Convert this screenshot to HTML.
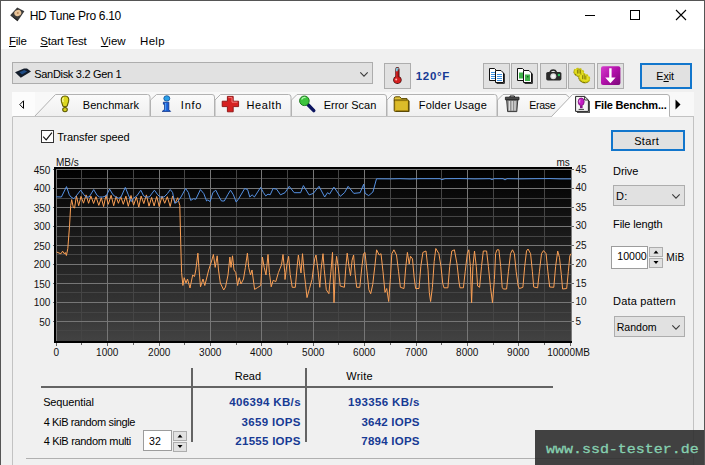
<!DOCTYPE html>
<html>
<head>
<meta charset="utf-8">
<title>HD Tune Pro 6.10</title>
<style>
*{margin:0;padding:0;box-sizing:border-box;}
html,body{width:705px;height:465px;overflow:hidden;background:#f0f0f0;}
body{font-family:"Liberation Sans",sans-serif;font-size:12px;color:#000;position:relative;}
.abs{position:absolute;}
.t{position:absolute;white-space:nowrap;line-height:14px;height:14px;transform-origin:0 50%;}
.ax{position:absolute;white-space:nowrap;font-size:10px;line-height:10px;height:10px;color:#111;}
.axl{text-align:right;width:30px;}
.btn{position:absolute;background:#e1e1e1;border:1px solid #adadad;}
.val{font-weight:bold;color:#173a94;text-align:right;}
u{text-decoration:underline;text-underline-offset:1px;}
#title{letter-spacing:-0.30px;margin-left:-0.30px;}
#m1{letter-spacing:-0.25px;margin-left:1.00px;}
#m2{letter-spacing:-0.22px;margin-left:0.35px;}
#m3{letter-spacing:-0.00px;margin-left:-0.15px;}
#m4{letter-spacing:0.30px;margin-left:0.05px;}
#drivetxt{letter-spacing:-0.30px;margin-left:-0.80px;}
#temp{letter-spacing:0.70px;margin-left:-0.25px;}
#exittxt{letter-spacing:-0.10px;margin-left:0.35px;}
#tb1{letter-spacing:0.08px;margin-left:-0.25px;}
#tb2{letter-spacing:0.73px;margin-left:-0.15px;}
#tb3{letter-spacing:0.57px;margin-left:-0.40px;}
#tb4{letter-spacing:0.00px;margin-left:-0.30px;}
#tb5{letter-spacing:0.18px;margin-left:-0.25px;}
#tb6{letter-spacing:-0.36px;margin-left:-0.70px;}
#tb7{letter-spacing:-0.18px;margin-left:-0.50px;}
#tspeed{letter-spacing:-0.08px;margin-left:0.15px;}
#rd{letter-spacing:0.03px;margin-left:-0.25px;}
#wr{letter-spacing:0.22px;margin-left:0.25px;}
#r1{letter-spacing:-0.12px;margin-left:-0.85px;}
#r2{letter-spacing:-0.37px;margin-left:-0.35px;}
#r3{letter-spacing:-0.31px;margin-left:-0.35px;}
#v1{letter-spacing:0.35px;margin-left:0.90px;}
#v2{letter-spacing:0.32px;margin-left:0.75px;}
#v3{letter-spacing:0.28px;margin-left:0.75px;}
#v4{letter-spacing:0.37px;margin-left:0.75px;}
#v5{letter-spacing:0.23px;margin-left:0.75px;}
#v6{letter-spacing:0.25px;margin-left:0.75px;}
#n32{letter-spacing:0.28px;margin-left:-0.05px;}
#start{letter-spacing:0.38px;margin-left:-0.85px;}
#ldrive{letter-spacing:-0.09px;margin-left:-0.95px;}
#dd{letter-spacing:0.21px;margin-left:-0.90px;}
#lfl{letter-spacing:-0.13px;margin-left:-0.95px;}
#n10000{letter-spacing:-0.01px;margin-left:-0.75px;}
#mib{letter-spacing:0.21px;margin-left:-0.75px;}
#ldp{letter-spacing:0.19px;margin-left:-0.95px;}
#rnd{letter-spacing:-0.03px;margin-left:-0.25px;}
#wm{letter-spacing:-0.01px;margin-left:0.60px;}
</style>
</head>
<body>
<!--TITLE-->
<div class="abs" style="left:0;top:0;width:705px;height:49px;background:#fff;"></div>
<svg class="abs" style="left:9px;top:6px;width:17px;height:17px;" viewBox="0 0 17 17">
  <path d="M1.2 9.2 L8.2 1.6 L15.4 5.2 L8.6 15.2 Z" fill="#3a3a3a"/>
  <path d="M1.2 9.2 L8.6 13.4 L8.6 15.2 Z" fill="#222"/>
  <ellipse cx="8.8" cy="7.0" rx="3.6" ry="3.0" fill="#e9c59a" transform="rotate(-25 8.8 7)"/>
  <circle cx="8.8" cy="7.0" r="1" fill="#b9895a"/>
</svg>
<div class="t" id="title" style="left:30px;top:9px;">HD Tune Pro 6.10</div>
<div class="t" id="m1" style="font-size:11.5px;left:8px;top:34px;"><u>F</u>ile</div>
<div class="t" id="m2" style="font-size:11.5px;left:40px;top:34px;"><u>S</u>tart Test</div>
<div class="t" id="m3" style="font-size:11.5px;left:101px;top:34px;"><u>V</u>iew</div>
<div class="t" id="m4" style="font-size:11.5px;left:140px;top:34px;">Help</div>
<svg class="abs" style="left:560px;top:0;width:145px;height:32px;" viewBox="0 0 145 32">
  <path d="M25 15.5h10" stroke="#000" stroke-width="1" fill="none"/>
  <rect x="70.5" y="10.5" width="9" height="9" stroke="#000" stroke-width="1" fill="none"/>
  <path d="M116 10l10 10M126 10l-10 10" stroke="#000" stroke-width="1.1" fill="none"/>
</svg>
<div class="btn" style="left:12px;top:62px;width:361px;height:22px;"></div>
<svg class="abs" style="left:14px;top:67px;width:18px;height:12px;" viewBox="0 0 18 12">
  <path d="M1 5.2 L10 1.4 L13 1.4 L17 4.4 L6.8 10.8 Z" fill="#131c2a"/>
  <path d="M5.4 5.2 L10.2 3 L13.2 4.4 L8 7.4 Z" fill="#1f4c86"/>
</svg>
<div class="t" id="drivetxt" style="left:35px;top:67px;font-size:11px;">SanDisk 3.2 Gen 1</div>
<svg class="abs" style="left:359px;top:71px;width:10px;height:7px;" viewBox="0 0 10 7"><path d="M1.3 1.4 L5 5.1 L8.7 1.4" stroke="#3a3a3a" stroke-width="1.1" fill="none"/></svg>

<div class="btn" style="left:384px;top:63px;width:27px;height:26px;"></div>
<svg class="abs" style="left:390px;top:65px;width:16px;height:22px;" viewBox="0 0 16 22">
  <path d="M5.3 4.2 a2.1 2.1 0 0 1 4.2 0 V11.6 a4.3 3.9 0 1 1 -4.2 0 Z" fill="#4a0c0c"/>
  <path d="M5.9 4.2 a1.5 1.5 0 0 1 3 0 V12 a3.6 3.2 0 1 1 -3 0 Z" fill="#d42020"/>
  <path d="M5.9 4.2 a1.5 1.5 0 0 1 3 0 V6.2 H5.9 Z" fill="#7fd0e6"/>
  <path d="M8.9 4.2 V12 a3.6 3.2 0 0 1 -1.4 5.9 a3.4 3 0 0 0 0.2 -5.9 V4.2 Z" fill="#7a1212"/>
  <circle cx="6.2" cy="14.6" r="1" fill="#ffb4b4"/>
</svg>
<div class="t val" id="temp" style="left:416px;top:69px;font-size:11.5px;text-align:left;">120°F</div>

<div class="btn" style="left:483px;top:63px;width:27px;height:26px;"></div>
<div class="btn" style="left:511px;top:63px;width:27px;height:26px;"></div>
<div class="btn" style="left:540px;top:63px;width:27px;height:26px;"></div>
<div class="btn" style="left:568px;top:63px;width:27px;height:26px;"></div>
<div class="btn" style="left:597px;top:63px;width:27px;height:26px;"></div>
<!-- copy text icon -->
<svg class="abs" style="left:487px;top:66px;width:20px;height:20px;" viewBox="0 0 20 20">
  <path d="M2.5 2.5 H7.5 L9.5 4.5 V14.5 H2.5 Z" fill="#fff" stroke="#111" stroke-width="1"/>
  <path d="M4 6.5h4M4 8.5h4M4 10.5h4M4 12.5h4" stroke="#3a8fe0" stroke-width="1"/>
  <path d="M9.6 17.4 H17.4 V7.6" stroke="#222" stroke-width="1" fill="none"/>
  <path d="M8.5 4.5 H14 L16.5 7 V16.5 H8.5 Z" fill="#fff" stroke="#111" stroke-width="1"/>
  <path d="M10 8.5h5M10 10.5h5M10 12.5h5M10 14.5h5" stroke="#3a8fe0" stroke-width="1"/>
</svg>
<!-- copy image icon -->
<svg class="abs" style="left:515px;top:66px;width:20px;height:20px;" viewBox="0 0 20 20">
  <path d="M2.5 2.5 H7.5 L9.5 4.5 V14.5 H2.5 Z" fill="#fff" stroke="#111" stroke-width="1"/>
  <rect x="4" y="6.5" width="4.5" height="6" fill="#3fb24a"/>
  <path d="M9.6 17.4 H17.4 V7.6" stroke="#222" stroke-width="1" fill="none"/>
  <path d="M8.5 4.5 H14 L16.5 7 V16.5 H8.5 Z" fill="#fff" stroke="#111" stroke-width="1"/>
  <rect x="10" y="8.5" width="5" height="6.5" fill="#3fb24a"/>
  <rect x="12" y="10" width="1.4" height="1.4" fill="#155c1c"/>
</svg>
<!-- camera -->
<svg class="abs" style="left:544px;top:66px;width:20px;height:20px;" viewBox="0 0 20 20">
  <path d="M6 6 a3.6 3.6 0 0 1 6.4 0" stroke="#222" stroke-width="1.6" fill="none"/>
  <rect x="2.2" y="6" width="15.2" height="8.4" rx="1.6" fill="#2a2a2a"/>
  <circle cx="9.3" cy="10.3" r="3" fill="#d8d8d8"/>
  <circle cx="9.3" cy="10.3" r="1.8" fill="#f4f4f4"/>
  <circle cx="14.9" cy="9" r="1.2" fill="#2fc060"/>
</svg>
<!-- yellow coins/gears -->
<svg class="abs" style="left:571px;top:65px;width:22px;height:22px;" viewBox="0 0 22 22">
  <g transform="rotate(22 7.9 7.4)">
    <ellipse cx="7.9" cy="8.0" rx="5.3" ry="3.9" fill="#6e6800"/>
    <ellipse cx="7.9" cy="7.2" rx="5.0" ry="3.6" fill="#e6e020" stroke="#c8c210" stroke-width="1.4" stroke-dasharray="2 1.2"/>
  </g>
  <path d="M6.4 4.6v4M8 3.6v5M9.6 4.8v4" stroke="#6e6800" stroke-width=".8"/>
  <g transform="rotate(22 13.2 13.1)">
    <ellipse cx="13.2" cy="13.8" rx="5.8" ry="4.2" fill="#6e6800"/>
    <ellipse cx="13.2" cy="12.9" rx="5.5" ry="3.9" fill="#e6e020" stroke="#c8c210" stroke-width="1.4" stroke-dasharray="2 1.2"/>
  </g>
  <path d="M11.6 10.2v4M13.2 9.4v5M14.8 10.6v4" stroke="#6e6800" stroke-width=".8"/>
</svg>
<!-- purple download -->
<svg class="abs" style="left:600px;top:65px;width:22px;height:22px;" viewBox="0 0 22 22">
  <defs><linearGradient id="pg" x1="0" y1="0" x2="1" y2="1"><stop offset="0" stop-color="#d63ccc"/><stop offset=".5" stop-color="#b010a8"/><stop offset="1" stop-color="#7a0878"/></linearGradient></defs>
  <rect x="1" y="1.2" width="19.4" height="18.8" rx="2" fill="url(#pg)"/>
  <path d="M9.2 3.2 H11.6 V12.4 H15.6 L10.4 18.2 L5.2 12.4 H9.2 Z" fill="#fff"/>
</svg>

<div class="btn" style="left:640px;top:63px;width:52px;height:26px;border:2px solid #1276cc;"></div>
<div class="t" id="exittxt" style="left:656px;top:69px;font-size:10.8px;">E<u>x</u>it</div>

<svg class="abs" style="left:0;top:88px;width:705px;height:32px;" viewBox="0 88 705 32">
  <defs><linearGradient id="tg" x1="0" y1="0" x2="0" y2="1"><stop offset="0" stop-color="#fbfbfb"/><stop offset="1" stop-color="#efefef"/></linearGradient></defs>
  <rect x="12" y="92" width="682" height="25" fill="#f8f8f8"/>
  <rect x="12" y="92" width="23" height="24" fill="#fcfcfc"/>
  <g fill="url(#tg)" stroke="#b2b2b2" stroke-width="1">
    <!-- Erase (behind active) -->
    <path d="M497.5 116.5 V100 L503 94.5 H566 L570 98 V116.5"/>
    <path d="M387 116.5 V100 L392.5 94.5 H494.5 Q497 94.5 497 97 V116.5"/>
    <path d="M291.5 116.5 V100 L297 94.5 H384 Q386.5 94.5 386.5 97 V116.5"/>
    <path d="M215 116.5 V100 L220.5 94.5 H288.5 Q291 94.5 291 97 V116.5"/>
    <path d="M150.5 116.5 V100 L156.5 94.5 H212 Q214.5 94.5 214.5 97 V116.5"/>
    <path d="M34.5 116.5 L55.5 94.5 H147.5 Q150 94.5 150 97 V116.5"/>
  </g>
  <path d="M12.5 116.5 H694" stroke="#c2c2c2" stroke-width="1" fill="none"/>
  <!-- active -->
  <path d="M551.5 117 L572.5 94.5 H667 Q669.5 94.5 669.5 97 V117 Z" fill="#fff"/>
  <path d="M551.5 116.5 L572.5 94.5 H667 Q669.5 94.5 669.5 97 V116.5" fill="none" stroke="#b2b2b2" stroke-width="1"/>
  <!-- nav arrows -->
  <path d="M23.5 100.8 L19.8 104.6 L23.5 108.4 Z" fill="#fff" stroke="#000" stroke-width="1"/>
  <path d="M675.5 99.5 L680.5 104.5 L675.5 109.5 Z" fill="#000"/>
</svg>
<!-- tab icons -->
<svg class="abs" style="left:59px;top:95px;width:12px;height:18px;" viewBox="0 0 12 18">
  <path d="M6 1 C9.4 1 10.2 3.6 9.6 6.4 L8.2 11 Q6 12.4 3.8 11 L2.4 6.4 C1.8 3.6 2.6 1 6 1 Z" fill="#dcd820" stroke="#5e5a00" stroke-width="1.1"/>
  <path d="M4.6 2.6 C3.6 3.4 3.6 5.4 4.2 7" stroke="#fbf9a8" stroke-width="1.2" fill="none"/>
  <ellipse cx="6" cy="14.6" rx="2.3" ry="2.1" fill="#d6d21c" stroke="#5e5a00" stroke-width="1.1"/>
</svg>
<div class="t" id="tb1" style="left:83px;top:98px;font-size:11px;">Benchmark</div>
<svg class="abs" style="left:160px;top:95px;width:13px;height:18px;" viewBox="0 0 13 18">
  <ellipse cx="6.8" cy="3.4" rx="3" ry="2.7" fill="#2aa0e8" stroke="#0d4f9c" stroke-width=".8"/>
  <path d="M3.4 7.2 H8.8 V14.6 L10.6 16.4 H2.2 L4.6 14.4 V9.2 H3.4 Z" fill="#1b5fd6" stroke="#0a2f86" stroke-width=".8"/>
  <path d="M5.6 8 V15.6" stroke="#4e9bf4" stroke-width="1.2"/>
</svg>
<div class="t" id="tb2" style="left:181px;top:98px;font-size:11px;">Info</div>
<svg class="abs" style="left:221px;top:95px;width:19px;height:18px;" viewBox="0 0 19 18">
  <path d="M6.4 1.4 H12.2 V6.2 H17.6 V11.6 H12.2 V16.8 H6.4 V11.6 H1.2 V6.2 H6.4 Z" fill="#d62020" stroke="#8a0e0e" stroke-width=".9" stroke-linejoin="round"/>
  <path d="M7.4 2.6 H11 V7.2 H16.4" stroke="#f47a7a" stroke-width="1" fill="none"/>
</svg>
<div class="t" id="tb3" style="left:247px;top:98px;font-size:11px;">Health</div>
<svg class="abs" style="left:297px;top:94px;width:20px;height:20px;" viewBox="0 0 20 20">
  <path d="M10.6 10.2 L16.8 16.6" stroke="#0c1560" stroke-width="3.4" stroke-linecap="round"/>
  <circle cx="7.4" cy="6.8" r="4.8" fill="#3cc43c" stroke="#1e7a1e" stroke-width="1"/>
  <path d="M4.6 5.6 A3.4 3.4 0 0 1 8.6 3.6" stroke="#b4f4b4" stroke-width="1.3" fill="none"/>
</svg>
<div class="t" id="tb4" style="left:324px;top:98px;font-size:11px;">Error Scan</div>
<svg class="abs" style="left:393px;top:95px;width:18px;height:18px;" viewBox="0 0 18 18">
  <path d="M1.2 3.4 Q1.2 1.8 2.8 1.8 H6.8 L8.4 3.6 H14 V6 H1.2 Z" fill="#e2c63c" stroke="#5a4800" stroke-width="1"/>
  <rect x="1.2" y="5" width="14.6" height="11.4" rx="1" fill="#cfa81a" stroke="#5a4800" stroke-width="1"/>
  <rect x="2.6" y="6.4" width="11.8" height="8.6" fill="#dcbc2a"/>
  <path d="M15.8 6 V16.4 H3" stroke="#5a4a06" stroke-width="1.2" fill="none"/>
</svg>
<div class="t" id="tb5" style="left:419px;top:98px;font-size:11px;">Folder Usage</div>
<svg class="abs" style="left:504px;top:95px;width:17px;height:18px;" viewBox="0 0 17 18">
  <path d="M2.6 4.6 H13.8 L12.8 16.6 H3.6 Z" fill="#8e8e8e" stroke="#2a2a2a" stroke-width=".9"/>
  <path d="M5.4 6 V15.4M8.2 6 V15.4M11 6 V15.4" stroke="#dcdcdc" stroke-width="1.3"/>
  <path d="M1.4 2.2 H15 V4.8 H1.4 Z" fill="#4a4a4a" stroke="#1a1a1a" stroke-width=".8"/>
  <path d="M6 2 V1 H10.4 V2" stroke="#111" stroke-width="1" fill="none"/>
</svg>
<div class="t" id="tb6" style="left:530px;top:98px;font-size:10.6px;">Erase</div>
<svg class="abs" style="left:574px;top:95px;width:16px;height:18px;" viewBox="0 0 16 18">
  <path d="M3 17.4 H15.4 V6" stroke="#555" stroke-width="1.2" fill="none"/>
  <path d="M1.6 1.4 H10.6 L14.4 5 V16.4 H1.6 Z" fill="#f4f4f4" stroke="#222" stroke-width="1"/>
  <path d="M10.6 1.4 V5 H14.4" fill="none" stroke="#222" stroke-width=".9"/>
  <ellipse cx="7.2" cy="6.8" rx="3" ry="3.8" fill="#c31cc3" stroke="#6a0a6a" stroke-width=".7"/>
  <path d="M6 4.6 Q5.4 6 5.8 7.6" stroke="#f4a6f4" stroke-width="1" fill="none"/>
  <rect x="6" y="10.4" width="2.6" height="2.8" fill="#8a128a"/>
  <path d="M4.6 14.4 H10" stroke="#444" stroke-width="1"/>
</svg>
<div class="t" id="tb7" style="left:595px;top:98px;font-size:11px;font-weight:bold;">File Benchm...</div>

<div class="abs" style="left:12px;top:117px;width:1px;height:348px;background:#c2c2c2;"></div>
<div class="abs" style="left:693px;top:117px;width:1px;height:348px;background:#c2c2c2;"></div>
<div class="abs" style="left:41px;top:130px;width:13px;height:13px;background:#fff;border:1px solid #333;"></div>
<svg class="abs" style="left:41px;top:130px;width:13px;height:13px;" viewBox="0 0 13 13"><path d="M2.2 6.6 L5.2 9.8 L10.9 2.6" stroke="#111" stroke-width="1.15" fill="none"/></svg>
<div class="t" id="tspeed" style="left:57px;top:130px;font-size:11px;">Transfer speed</div>
<div class="abs" style="left:26px;top:458px;width:658px;height:1px;background:#b0b0b0;"></div>

<svg class="abs" style="left:40px;top:160px;width:545px;height:190px;" viewBox="40 160 545 190">
  <defs><linearGradient id="cg" x1="0" y1="0" x2="0" y2="1"><stop offset="0" stop-color="#000"/><stop offset="1" stop-color="#424242"/></linearGradient></defs>
  <rect x="54" y="167" width="518" height="176" fill="#000"/>
  <rect x="56" y="169" width="515" height="172" fill="url(#cg)"/>
  <g stroke-width="1" shape-rendering="crispEdges" fill="none">
    <path stroke="#454545" d="M56 330.5H571.5 M56 312.5H571.5 M56 292.5H571.5 M56 274.5H571.5 M56 254.5H571.5 M56 236.5H571.5 M56 216.5H571.5 M56 198.5H571.5 M56 178.5H571.5 M81.5 169V341 M133.5 169V341 M184.5 169V341 M236.5 169V341 M287.5 169V341 M338.5 169V341 M390.5 169V341 M441.5 169V341 M493.5 169V341 M544.5 169V341"/>
    <path stroke="#767676" d="M56 321.5H571.5 M56 302.5H571.5 M56 283.5H571.5 M56 264.5H571.5 M56 245.5H571.5 M56 226.5H571.5 M56 207.5H571.5 M56 188.5H571.5 M107.5 169V341 M159.5 169V341 M210.5 169V341 M261.5 169V341 M313.5 169V341 M364.5 169V341 M416.5 169V341 M467.5 169V341 M518.5 169V341"/>
    <path stroke="#777777" d="M56 169.5H571.5M56.5 169V341"/>
    <path stroke="#7a7a7a" d="M571.5 169V341"/>
  </g>
  <g stroke="#666" stroke-width="1" shape-rendering="crispEdges">
    <path d="M53 321.5h1 M53 302.5h1 M53 283.5h1 M53 264.5h1 M53 245.5h1 M53 226.5h1 M53 207.5h1 M53 188.5h1 M53 169.5h1"/><path d="M572 321.5h2 M572 302.5h2 M572 283.5h2 M572 264.5h2 M572 245.5h2 M572 226.5h2 M572 207.5h2 M572 188.5h2 M572 169.5h2"/><path d="M56.5 343v3 M107.5 343v3 M159.5 343v3 M210.5 343v3 M261.5 343v3 M313.5 343v3 M364.5 343v3 M416.5 343v3 M467.5 343v3 M518.5 343v3 M570.5 343v3"/><path d="M81.5 343v1.5 M133.5 343v1.5 M184.5 343v1.5 M236.5 343v1.5 M287.5 343v1.5 M338.5 343v1.5 M390.5 343v1.5 M441.5 343v1.5 M493.5 343v1.5 M544.5 343v1.5"/>
  </g>
  <polyline points="56.6,252.0 60.9,253.8 62.6,251.2 64.3,253.8 65.3,252.5 66.4,255.5 67.8,248.6 69.5,226.3 70.7,205.6 71.7,199.6 73.3,207.4 74.6,208.0 76.4,195.8 78.7,205.7 81.0,196.4 83.5,203.2 86.1,194.9 88.6,203.3 90.9,196.1 93.6,203.5 96.0,196.7 98.8,205.4 101.3,197.7 103.6,206.6 106.0,195.2 108.3,204.3 111.1,195.3 113.7,205.7 116.1,196.4 118.4,203.3 120.8,196.8 123.3,204.3 125.9,196.2 128.3,206.3 131.0,195.5 133.6,205.2 136.4,197.0 138.8,207.1 141.1,196.1 143.8,203.6 146.4,194.9 149.0,206.2 151.6,197.4 154.1,205.9 156.7,196.5 159.2,206.5 162.0,196.2 164.7,203.3 167.3,196.7 170.2,206.5 172.6,196.0 175.2,203.1 177.7,197.7 179.8,205.5 180.8,245.5 181.6,272.6 182.9,285.5 184.2,277.7 186.0,283.0 187.5,279.0 190.0,288.0 192.7,275.0 194.5,276.5 195.8,270.0 197.9,253.2 198.9,267.4 200.5,286.8 203.0,279.0 204.8,285.5 208.7,270.0 211.3,262.0 213.4,254.5 215.2,267.4 217.2,255.8 218.5,270.0 220.3,283.0 223.7,290.0 225.5,287.0 228.0,275.0 229.9,257.0 231.0,267.4 232.5,255.8 234.0,270.0 235.8,272.6 237.6,285.5 239.2,277.7 241.0,284.0 243.5,279.0 245.4,267.4 247.4,253.2 248.7,267.4 250.5,275.0 252.0,270.0 254.6,289.4 257.7,287.5 260.8,285.5 262.4,257.0 264.2,267.4 266.0,275.0 268.0,254.5 269.4,272.6 271.2,286.8 273.2,280.3 275.8,281.6 278.4,272.6 281.5,264.8 283.0,254.5 284.8,272.6 285.0,279.5 287.0,264.0 288.6,256.3 290.2,274.4 292.2,287.3 295.3,287.3 297.4,264.0 298.4,255.0 300.0,266.6 301.0,273.0 302.5,253.7 304.1,271.8 305.6,284.7 307.0,297.6 309.5,288.5 312.0,279.5 314.7,258.9 316.0,255.0 318.0,270.5 319.8,287.3 321.1,269.2 323.0,253.7 324.2,269.2 326.3,289.8 328.9,293.7 330.9,271.8 332.5,252.4 334.0,302.7 335.6,266.6 336.6,256.3 338.2,266.6 340.2,286.0 344.4,287.3 345.9,266.6 347.2,253.2 349.0,266.6 350.5,275.6 352.1,260.2 353.6,255.0 355.2,274.4 356.7,287.3 359.8,287.3 361.9,266.6 363.5,253.7 365.0,252.4 367.0,271.8 368.9,289.8 370.7,293.7 372.7,284.7 374.8,266.6 376.6,249.8 379.2,255.0 381.0,253.7 383.0,271.8 385.0,292.4 386.7,288.5 388.7,301.5 390.3,279.5 391.8,253.7 393.9,249.8 396.5,255.0 398.6,271.8 400.4,287.3 404.0,288.5 405.8,266.6 407.4,252.4 409.2,264.0 410.5,256.3 412.5,258.9 414.1,277.0 415.6,288.5 419.0,288.5 420.8,266.6 422.9,252.4 426.0,251.0 428.0,269.2 429.3,292.4 430.6,301.5 432.4,287.3 434.2,261.5 435.8,248.5 438.9,253.7 441.0,266.6 442.7,283.4 444.0,287.8 447.9,287.8 449.7,266.6 451.8,251.0 454.4,249.8 457.0,264.0 459.0,282.0 460.0,287.8 463.4,287.8 465.2,271.8 467.3,253.7 468.8,249.8 470.4,266.6 471.6,302.7 472.9,266.6 474.5,251.0 476.3,266.6 477.6,286.0 479.6,287.3 481.5,266.6 483.3,251.0 486.6,251.0 488.4,266.6 490.5,287.3 492.5,302.7 494.4,279.5 495.6,253.7 497.0,249.8 498.9,249.8 500.7,266.6 502.2,287.3 503.3,289.0 506.6,289.0 508.4,271.8 510.5,253.7 512.5,249.8 514.4,253.7 516.2,271.8 518.2,286.0 519.5,288.5 522.9,287.3 524.7,266.6 526.5,251.0 528.0,249.0 530.6,253.7 532.4,271.8 533.7,287.0 537.6,287.8 539.4,271.8 541.5,253.7 543.5,250.6 546.1,253.7 547.9,271.8 549.7,287.0 553.8,287.3 555.6,266.6 557.7,251.0 559.5,257.6 561.3,274.4 562.6,289.0 566.7,288.5 568.3,271.8 569.8,256.0 571.0,253.7" fill="none" stroke="#fba055" stroke-width="1" stroke-linejoin="round"/>
  <polyline points="56.3,196.8 61.4,197.0 66.5,186.6 69.3,194.8 71.0,197.0 73.9,198.7 76.7,195.3 80.7,190.2 83.5,194.2 85.8,197.0 89.2,197.0 93.7,189.6 97.1,195.3 99.4,197.0 102.8,197.0 106.2,195.9 109.6,189.1 113.0,194.8 115.8,197.0 118.7,198.2 121.0,197.0 125.3,187.4 128.3,194.8 131.2,201.6 133.4,198.2 136.8,195.9 140.8,190.2 143.6,195.9 145.9,197.0 149.3,197.0 154.4,190.2 157.8,194.8 160.0,197.0 164.0,197.0 167.4,193.6 170.3,189.6 172.6,192.5 174.8,203.3 177.7,201.6 181.0,197.0 185.6,188.5 188.4,192.5 190.7,200.4 193.5,198.7 195.8,199.3 200.4,189.6 203.8,193.6 206.6,201.0 207.8,199.9 210.1,201.6 212.9,192.5 215.8,190.2 218.6,195.9 221.5,201.0 224.3,201.0 227.7,194.8 230.5,190.2 233.4,194.8 236.2,202.1 239.0,198.2 244.7,188.5 247.6,189.6 249.8,197.0 252.1,194.8 254.4,197.0 260.6,187.4 263.4,192.5 265.7,195.9 268.0,194.2 270.2,194.8 273.1,188.5 276.5,189.1 280.5,194.8 285.0,192.7 289.2,186.3 294.2,192.7 300.6,192.7 303.4,185.6 309.1,194.9 313.3,193.4 319.0,186.3 324.7,197.0 327.5,192.7 329.6,194.1 333.9,187.1 340.3,196.3 344.5,192.7 348.1,186.3 353.8,193.4 360.1,192.7 363.7,184.2 365.1,193.4 368.7,195.6 372.9,192.0 376.5,178.8 390.0,178.9 400.0,178.7 410.0,179.0 420.0,178.7 430.0,178.7 440.0,178.7 442.0,179.7 445.0,178.7 460.0,178.6 475.0,178.9 490.0,178.7 492.0,179.6 494.0,178.7 503.0,178.7 505.0,179.9 507.0,178.7 520.0,178.9 535.0,178.7 550.0,178.6 560.0,178.9 571.0,178.9" fill="none" stroke="#5692e4" stroke-width="1" stroke-linejoin="round"/>
</svg>
<div class="ax" id="mbs" style="left:56px;top:157.6px;">MB/s</div>
<div class="ax" id="ms" style="left:556.4px;top:157.6px;">ms</div>
<div class="ax axl" style="left:20.4px;top:166px;">450</div>
<div class="ax axl" style="left:20.4px;top:184px;">400</div>
<div class="ax axl" style="left:20.4px;top:204px;">350</div>
<div class="ax axl" style="left:20.4px;top:222px;">300</div>
<div class="ax axl" style="left:20.4px;top:242px;">250</div>
<div class="ax axl" style="left:20.4px;top:260px;">200</div>
<div class="ax axl" style="left:20.4px;top:280px;">150</div>
<div class="ax axl" style="left:20.4px;top:298px;">100</div>
<div class="ax axl" style="left:20.4px;top:318px;">50</div>
<div class="ax" style="left:575.4px;top:165.3px;">45</div>
<div class="ax" style="left:575.4px;top:183.3px;">40</div>
<div class="ax" style="left:575.4px;top:203.3px;">35</div>
<div class="ax" style="left:575.4px;top:221.3px;">30</div>
<div class="ax" style="left:575.4px;top:241.3px;">25</div>
<div class="ax" style="left:575.4px;top:259.3px;">20</div>
<div class="ax" style="left:575.4px;top:279.3px;">15</div>
<div class="ax" style="left:575.4px;top:297.3px;">10</div>
<div class="ax" style="left:575.4px;top:317.3px;">5</div>
<div class="ax" style="left:53.4px;top:348px;">0</div>
<div class="ax" style="left:96.1px;top:348px;">1000</div>
<div class="ax" style="left:148.1px;top:348px;">2000</div>
<div class="ax" style="left:199.1px;top:348px;">3000</div>
<div class="ax" style="left:250.1px;top:348px;">4000</div>
<div class="ax" style="left:302.1px;top:348px;">5000</div>
<div class="ax" style="left:353.1px;top:348px;">6000</div>
<div class="ax" style="left:405.1px;top:348px;">7000</div>
<div class="ax" style="left:456.1px;top:348px;">8000</div>
<div class="ax" style="left:507.1px;top:348px;">9000</div>
<div class="ax" style="left:547.2px;top:348px;">10000MB</div>

<div class="abs" style="left:41px;top:386px;width:512px;height:2px;background:#646464;"></div>
<div class="abs" style="left:191px;top:368px;width:2px;height:74px;background:#646464;"></div>
<div class="abs" style="left:305px;top:368px;width:2px;height:74px;background:#646464;"></div>
<div class="t" id="rd" style="left:235px;top:369px;font-size:11px;">Read</div>
<div class="t" id="wr" style="left:346px;top:369px;font-size:11px;">Write</div>
<div class="t" id="r1" style="left:44px;top:395px;font-size:11px;">Sequential</div>
<div class="t" id="r2" style="left:44px;top:415px;font-size:11px;">4 KiB random single</div>
<div class="t" id="r3" style="left:44px;top:434px;font-size:11px;">4 KiB random multi</div>
<div class="t val" id="v1" style="left:200px;top:395px;width:100px;font-size:11.5px;">406394 KB/s</div>
<div class="t val" id="v2" style="left:200px;top:415px;width:100px;font-size:11.5px;">3659 IOPS</div>
<div class="t val" id="v3" style="left:200px;top:434px;width:100px;font-size:11.5px;">21555 IOPS</div>
<div class="t val" id="v4" style="left:319px;top:395px;width:100px;font-size:11.5px;">193356 KB/s</div>
<div class="t val" id="v5" style="left:319px;top:415px;width:100px;font-size:11.5px;">3642 IOPS</div>
<div class="t val" id="v6" style="left:319px;top:434px;width:100px;font-size:11.5px;">7894 IOPS</div>
<div class="abs" style="left:143px;top:430px;width:29px;height:21px;background:#fff;border:1px solid #9c9c9c;"></div>
<div class="t" id="n32" style="left:149px;top:434px;font-size:10.6px;">32</div>
<div class="btn" style="left:173px;top:431px;width:14px;height:10px;"></div>
<div class="btn" style="left:173px;top:442px;width:14px;height:10px;"></div>
<svg class="abs" style="left:173px;top:431px;width:14px;height:21px;" viewBox="0 0 14 21"><path d="M4.5 6.5 L7 3.5 L9.5 6.5 Z M4.5 14 L7 17 L9.5 14 Z" fill="#000"/></svg>

<div class="btn" style="left:611px;top:130px;width:74px;height:21px;border:2px solid #1276cc;"></div>
<div class="t" id="start" style="left:635px;top:134px;font-size:11px;">Start</div>
<div class="t" id="ldrive" style="left:614px;top:164px;font-size:11px;">Drive</div>
<div class="btn" style="left:613px;top:185px;width:72px;height:21px;"></div>
<div class="t" id="dd" style="left:617px;top:189px;font-size:11px;">D:</div>
<svg class="abs" style="left:671px;top:193px;width:10px;height:7px;" viewBox="0 0 10 7"><path d="M1.3 1.4 L5 5.1 L8.7 1.4" stroke="#3a3a3a" stroke-width="1.1" fill="none"/></svg>
<div class="t" id="lfl" style="left:614px;top:217px;font-size:11px;">File length</div>
<div class="abs" style="left:611px;top:246px;width:37px;height:23px;background:#fff;border:1px solid #9c9c9c;"></div>
<div class="t" id="n10000" style="left:618px;top:249px;font-size:10.6px;">10000</div>
<div class="btn" style="left:649px;top:247px;width:14px;height:10px;"></div>
<div class="btn" style="left:649px;top:258px;width:14px;height:10px;"></div>
<svg class="abs" style="left:649px;top:247px;width:14px;height:21px;" viewBox="0 0 14 21"><path d="M4.5 6.5 L7 3.5 L9.5 6.5 Z M4.5 14 L7 17 L9.5 14 Z" fill="#000"/></svg>
<div class="t" id="mib" style="left:667px;top:250.8px;font-size:10.2px;">MiB</div>
<div class="t" id="ldp" style="left:614px;top:294px;font-size:11px;">Data pattern</div>
<div class="btn" style="left:614px;top:316px;width:71px;height:21px;"></div>
<div class="t" id="rnd" style="left:617px;top:320px;font-size:10.6px;">Random</div>
<svg class="abs" style="left:671px;top:324px;width:10px;height:7px;" viewBox="0 0 10 7"><path d="M1.3 1.4 L5 5.1 L8.7 1.4" stroke="#3a3a3a" stroke-width="1.1" fill="none"/></svg>

<div class="abs" style="left:535px;top:430px;width:170px;height:35px;background:rgba(45,45,45,0.9);"></div>
<div class="t" id="wm" style="left:545px;top:442px;font-family:'Liberation Mono',monospace;font-size:13.5px;line-height:16px;height:16px;color:#86d0b0;-webkit-text-stroke:0.3px #86d0b0;transform:scaleX(1.11);">www.ssd-tester.de</div>

<div class="abs" style="left:0;top:0;width:705px;height:465px;border-left:1px solid #555;border-top:1px solid #555;border-right:1px solid #555;"></div>
</body>
</html>
